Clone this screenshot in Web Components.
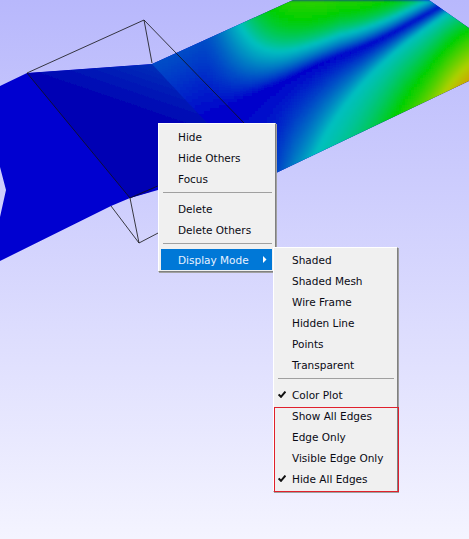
<!DOCTYPE html>
<html>
<head>
<meta charset="utf-8">
<style>
  html, body { margin: 0; padding: 0; }
  body { font-family: "DejaVu Sans", sans-serif; }
</style>
</head>
<body>
<model-view>
  <popup-menu style="--x: 158px; --y: 123px; --w: 118px; --pt: 2px; --pb: 1px; --gutter: 17px">
    <menu-item>Hide</menu-item>
    <menu-item>Hide Others</menu-item>
    <menu-item>Focus</menu-item>
    <menu-sep></menu-sep>
    <menu-item>Delete</menu-item>
    <menu-item>Delete Others</menu-item>
    <menu-sep></menu-sep>
    <menu-item active arrow>Display Mode</menu-item>
  </popup-menu>
  <popup-menu style="--x: 273px; --y: 247px; --w: 125px; --pt: 1px; --pb: 2px; --gutter: 16px">
    <menu-item>Shaded</menu-item>
    <menu-item>Shaded Mesh</menu-item>
    <menu-item>Wire Frame</menu-item>
    <menu-item>Hidden Line</menu-item>
    <menu-item>Points</menu-item>
    <menu-item>Transparent</menu-item>
    <menu-sep></menu-sep>
    <menu-item checked>Color Plot</menu-item>
    <menu-item>Show All Edges</menu-item>
    <menu-item>Edge Only</menu-item>
    <menu-item>Visible Edge Only</menu-item>
    <menu-item checked>Hide All Edges</menu-item>
  </popup-menu>
  <red-mark></red-mark>
</model-view>

<script>
// piecewise linear lookup, pts sorted by x
function lerpTable(pts, x) {
  if (x <= pts[0][0]) return pts[0][1];
  for (let i = 1; i < pts.length; i++) {
    if (x <= pts[i][0]) {
      const t = (x - pts[i - 1][0]) / (pts[i][0] - pts[i - 1][0]);
      return pts[i - 1][1] + t * (pts[i][1] - pts[i - 1][1]);
    }
  }
  return pts[pts.length - 1][1];
}

// same lookup averaged over a window, takes the kinks out of the contours
function smoothTable(pts, x) {
  let sum = 0;
  for (let i = -3; i <= 3; i++) sum += lerpTable(pts, x + i * 8);
  return sum / 7;
}

function smoothstep(a, b, x) {
  const t = Math.min(1, Math.max(0, (x - a) / (b - a)));
  return t * t * (3 - 2 * t);
}

const VALLEY = [[150, 150], [200, 120], [247, 97], [273, 87], [317, 63], [373, 43], [437, 8], [469, -10]];
const LOWER_CYAN = [[230, 900], [270, 200], [300, 110], [327, 68], [353, 43], [380, 24], [423, 14], [469, 8]];
const RAMP = [
  [0, [0, 0, 204]],
  [0.33, [0, 192, 192]],
  [0.5, [0, 208, 0]],
  [0.72, [176, 208, 0]],
  [0.9, [224, 136, 0]],
  [1, [224, 60, 0]]
];

function plotValue(x, y) {
  const d = y - smoothTable(VALLEY, x);
  if (d < 0) {
    const rate = 0.003 + 0.035 * smoothstep(200, 340, x) + Math.max(0, x - 340) * 0.00025;
    return 0.62 * (1 - Math.exp(d * rate));
  }
  const r = d / smoothTable(LOWER_CYAN, x);
  return r < 1 ? 0.33 * r : 0.33 + 0.056 * (r - 1);
}

function plotColor(v) {
  const table = c => lerpTable(RAMP.map(s => [s[0], s[1][c]]), v);
  return `rgb(${table(0) | 0},${table(1) | 0},${table(2) | 0})`;
}

function plotCells() {
  let out = '';
  for (let y = 0; y < 178; y += 3) {
    for (let x = 150; x < 472; x += 3) {
      out += `<rect x="${x}" y="${y}" width="3.5" height="3.5" fill="${plotColor(plotValue(x + 1.5, y + 1.5))}"/>`;
    }
  }
  return out;
}

class ModelView extends HTMLElement {
  constructor() {
    super();
    const shadowRoot = this.attachShadow({ mode: 'open' });
    shadowRoot.innerHTML = `
      <svg width="469" height="539" viewBox="0 0 469 539">
        <defs>
          <clipPath id="body">
            <polygon points="0,86 27,73 152,64 293,0 429,0 469,28 469,81 276,173 158,190 130,198 111,206 0,261 0,217 6,190 0,167"/>
          </clipPath>
          <filter id="soft" x="-5%" y="-5%" width="110%" height="110%"><feGaussianBlur stdDeviation="1.5"/></filter>
          <filter id="edge" x="-5%" y="-5%" width="110%" height="110%"><feGaussianBlur stdDeviation="0.7"/></filter>
          <linearGradient id="dark" gradientUnits="userSpaceOnUse" x1="150" y1="62" x2="125" y2="135">
            <stop offset="0" stop-color="#0030b8"/>
            <stop offset="0.6" stop-color="#0006b4"/>
            <stop offset="1" stop-color="#0000b4"/>
          </linearGradient>
        </defs>
        <g clip-path="url(#body)">
          <rect width="469" height="300" fill="#0000d0"/>
          <g filter="url(#soft)">${plotCells()}</g>
          <polygon points="27,73 152,64 207,123 215,130 150,192 130,198" fill="url(#dark)" filter="url(#edge)"/>
        </g>
        <g fill="none" stroke="#111" stroke-width="0.8">
          <polyline points="27,73 144,20 152,63"/>
          <polyline points="144,20 245,124"/>
          <polyline points="27,73 130,198 139,243 160,232"/>
          <polyline points="111,206 139,243"/>
          <polyline points="130,198 160,185"/>
        </g>
      </svg>
      <slot></slot>
      <style>
        :host {
          display: block;
          position: relative;
          width: 469px;
          height: 539px;
          overflow: hidden;
          background: linear-gradient(#b8b8fc, #f4f4ff);
        }
        svg { display: block; }
      </style>
    `;
  }
}

class PopupMenu extends HTMLElement {
  constructor() {
    super();
    const shadowRoot = this.attachShadow({ mode: 'open' });
    shadowRoot.innerHTML = `
      <slot></slot>
      <style>
        :host {
          display: flex;
          flex-direction: column;
          position: absolute;
          left: var(--x);
          top: var(--y);
          width: var(--w);
          box-sizing: border-box;
          padding: var(--pt) 3px var(--pb) 2px;
          background: #f0f0f0;
          border: 1px solid;
          border-color: #fff #808080 #808080 #fff;
          box-shadow: 1px 1px 0 #a0a0a0;
        }
      </style>
    `;
  }
}

class MenuItem extends HTMLElement {
  constructor() {
    super();
    const shadowRoot = this.attachShadow({ mode: 'open' });
    const check = this.hasAttribute('checked')
      ? '<svg class="check" width="8" height="7" viewBox="0 0 8 7"><path d="M0.6 3.4 L3 5.8 L7.4 0.6" fill="none" stroke="#111" stroke-width="2"/></svg>'
      : '';
    const arrow = this.hasAttribute('arrow')
      ? '<svg class="arrow" width="5" height="7" viewBox="0 0 5 7"><path d="M1 0 L4.5 3.5 L1 7 Z" fill="#fff"/></svg>'
      : '';
    shadowRoot.innerHTML = `
      <span class="gutter">${check}</span>
      <span class="label"><slot></slot></span>
      ${arrow}
      <style>
        :host {
          display: flex;
          align-items: center;
          height: 21px;
          font: 10.5px "DejaVu Sans", sans-serif;
          color: #0a0a14;
          white-space: nowrap;
        }
        :host([active]) { background: #0078d7; color: #e8f2ff; }
        .gutter { width: var(--gutter); flex: none; display: flex; padding-left: 2px; box-sizing: border-box; }
        .label { flex: 1; }
        .check { display: block; }
        .arrow { margin-right: 5px; }
      </style>
    `;
  }
}

class MenuSep extends HTMLElement {
  constructor() {
    super();
    const shadowRoot = this.attachShadow({ mode: 'open' });
    shadowRoot.innerHTML = `
      <style>
        :host {
          display: block;
          height: 9px;
          box-sizing: border-box;
          padding: 3px 0 5px 2px;
        }
        :host::before {
          content: "";
          display: block;
          height: 1px;
          background: #a0a0a0;
        }
      </style>
    `;
  }
}

class RedMark extends HTMLElement {
  constructor() {
    super();
    const shadowRoot = this.attachShadow({ mode: 'open' });
    shadowRoot.innerHTML = `
      <style>
        :host {
          display: block;
          position: absolute;
          left: 274px;
          top: 407px;
          width: 125px;
          height: 85px;
          box-sizing: border-box;
          border: 1px solid #e0202c;
        }
      </style>
    `;
  }
}

customElements.define('model-view', ModelView);
customElements.define('popup-menu', PopupMenu);
customElements.define('menu-item', MenuItem);
customElements.define('menu-sep', MenuSep);
customElements.define('red-mark', RedMark);
</script>
</body>
</html>
